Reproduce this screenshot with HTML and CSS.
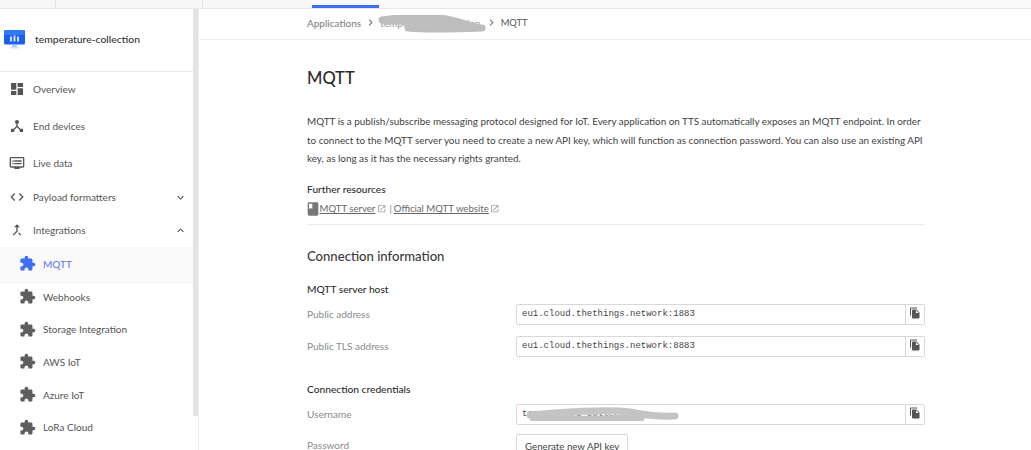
FILE: index.html
```html
<!DOCTYPE html>
<html lang="en">
<head>
<meta charset="utf-8">
<title>MQTT</title>
<link rel="stylesheet" href="styles.css">
</head>
<body>
<svg class="defs" width="0" height="0" aria-hidden="true">
  <symbol id="i-dashboard" viewBox="0 0 24 24"><path d="M3 13h8V3H3v10zm0 8h8v-6H3v6zm10 0h8V11h-8v10zm0-18v6h8V3h-8z"/></symbol>
  <symbol id="i-hub" viewBox="0 0 24 24"><path d="M17 16l-4-4V8.82C14.16 8.4 15 7.3 15 6c0-1.66-1.34-3-3-3S9 4.34 9 6c0 1.3.84 2.4 2 2.82V12l-4 4H3v5h5v-3.05l4-4.2 4 4.2V21h5v-5h-4z"/></symbol>
  <symbol id="i-dvr" viewBox="0 0 24 24"><path d="M21 3H3c-1.1 0-2 .9-2 2v12c0 1.1.9 2 2 2h5v2h8v-2h5c1.1 0 1.99-.9 1.99-2L23 5c0-1.1-.9-2-2-2zm0 14H3V5h18v12zm-2-9H8v2h11V8zm0 4H8v2h11v-2zM7 8H5v2h2V8zm0 4H5v2h2v-2z"/></symbol>
  <symbol id="i-code" viewBox="0 0 24 24"><path d="M9.4 16.6L4.8 12l4.6-4.6L8 6l-6 6 6 6 1.4-1.4zm5.2 0l4.6-4.6-4.6-4.6L16 6l6 6-6 6-1.4-1.4z"/></symbol>
  <symbol id="i-merge" viewBox="0 0 24 24"><path d="M17 20.41L18.41 19 15 15.59 13.59 17 17 20.41zM7.5 8H11v5.59L5.59 19 7 20.41l6-6V8h3.5L12 3.5 7.5 8z"/></symbol>
  <symbol id="i-ext" viewBox="0 0 24 24"><path d="M20.5 11H19V7c0-1.1-.9-2-2-2h-4V3.5C13 2.12 11.88 1 10.5 1S8 2.12 8 3.5V5H4c-1.1 0-1.99.9-1.99 2v3.8H3.5c1.49 0 2.7 1.21 2.7 2.7s-1.21 2.7-2.7 2.7H2V20c0 1.1.9 2 2 2h3.8v-1.5c0-1.49 1.21-2.7 2.7-2.7 1.49 0 2.7 1.21 2.7 2.7V22H17c1.1 0 2-.9 2-2v-4h1.5c1.38 0 2.5-1.12 2.5-2.5S21.88 11 20.5 11z"/></symbol>
  <symbol id="i-copy" viewBox="0 0 24 24"><path d="M16 1H4c-1.1 0-2 .9-2 2v14h2V3h12V1zm-1 4l6 6v10c0 1.1-.9 2-2 2H7.99C6.89 23 6 22.1 6 21l.01-14c0-1.1.89-2 1.99-2h7zm-1 7h5.5L14 6.5V12z"/></symbol>
  <symbol id="i-book" viewBox="0 0 24 24"><path d="M18 2H6c-1.1 0-2 .9-2 2v16c0 1.1.9 2 2 2h12c1.1 0 2-.9 2-2V4c0-1.1-.9-2-2-2zM6 4h5v8l-2.5-1.5L6 12V4z"/></symbol>
  <symbol id="i-launch" viewBox="0 0 24 24"><path d="M19 19H5V5h7V3H5c-1.11 0-2 .9-2 2v14c0 1.1.89 2 2 2h14c1.1 0 2-.9 2-2v-7h-2v7zM14 3v2h3.59l-9.83 9.83 1.41 1.41L19 6.41V10h2V3h-7z"/></symbol>
  <symbol id="i-down" viewBox="0 0 24 24"><path d="M7.41 8.59L12 13.17l4.59-4.58L18 10l-6 6-6-6 1.41-1.41z"/></symbol>
  <symbol id="i-up" viewBox="0 0 24 24"><path d="M7.41 15.41L12 10.83l4.59 4.58L18 14l-6-6-6 6z"/></symbol>
  <symbol id="i-right" viewBox="0 0 24 24"><path d="M10 6L8.59 7.41 13.17 12l-4.58 4.59L10 18l6-6z"/></symbol>
</svg>
<div class="app">
  <header class="topbar">
    <div class="seg seg-a"></div>
    <div class="seg seg-b"></div>
    <div class="seg seg-c"><span class="tab-active"></span></div>
    <div class="seg seg-d"></div>
  </header>
  <div class="main">
    <aside class="sidebar">
      <div class="side-inner">
        <div class="app-head">
          <svg class="logo" viewBox="0 0 21 19"><rect x="0" y="0" width="21" height="14.5" rx="1.5" fill="#1a5ff0"/><rect x="0" y="0" width="21" height="5" rx="1.5" fill="#2f7bf5"/><rect x="6" y="6.5" width="2" height="5" fill="#cfe0fb"/><rect x="9.5" y="5.5" width="2" height="6" fill="#cfe0fb"/><rect x="13" y="6.5" width="2" height="5" fill="#cfe0fb"/><rect x="8" y="15" width="5" height="2" fill="#a9d0f7"/><rect x="6" y="17" width="9" height="1.5" fill="#cfe4fa"/></svg>
          <span class="app-name">temperature-collection</span>
        </div>
        <nav class="nav">
          <a class="item tall"><svg class="ico"><use href="#i-dashboard"/></svg><span>Overview</span></a>
          <a class="item tall"><svg class="ico"><use href="#i-hub"/></svg><span>End devices</span></a>
          <a class="item tall"><svg class="ico"><use href="#i-dvr"/></svg><span>Live data</span></a>
          <a class="item"><svg class="ico"><use href="#i-code"/></svg><span>Payload formatters</span><svg class="caret"><use href="#i-down"/></svg></a>
          <a class="item open"><svg class="ico"><use href="#i-merge"/></svg><span>Integrations</span><svg class="caret"><use href="#i-up"/></svg></a>
          <a class="sub active"><svg class="ico-ext"><use href="#i-ext"/></svg><span>MQTT</span></a>
          <a class="sub first-after"><svg class="ico-ext"><use href="#i-ext"/></svg><span>Webhooks</span></a>
          <a class="sub short"><svg class="ico-ext"><use href="#i-ext"/></svg><span>Storage Integration</span></a>
          <a class="sub"><svg class="ico-ext"><use href="#i-ext"/></svg><span>AWS IoT</span></a>
          <a class="sub"><svg class="ico-ext"><use href="#i-ext"/></svg><span>Azure IoT</span></a>
          <a class="sub short"><svg class="ico-ext"><use href="#i-ext"/></svg><span>LoRa Cloud</span></a>
        </nav>
      </div>
      <div class="side-scroll"></div>
    </aside>
    <main class="content">
      <div class="crumbs">
        <span class="crumb">Applications</span>
        <svg class="crumb-sep"><use href="#i-right"/></svg>
        <span class="crumb crumb-hidden">temperature-collection
          <svg class="scribble" viewBox="0 0 110 20"><path d="M4 5 C30 1 60 1 78 6 L98 12 M30 13 C50 15 80 14 104 13" fill="none" stroke="#bdbdbd" stroke-width="7" stroke-linecap="round"/><path d="M6 6 C40 6 70 7 95 12" fill="none" stroke="#bdbdbd" stroke-width="7" stroke-linecap="round"/></svg>
        </span>
        <svg class="crumb-sep"><use href="#i-right"/></svg>
        <span class="crumb crumb-cur">MQTT</span>
      </div>
      <div class="page">
        <h1>MQTT</h1>
        <p class="intro">MQTT is a publish/subscribe messaging protocol designed for IoT. Every application on TTS automatically exposes an MQTT endpoint. In order<br>to connect to the MQTT server you need to create a new API key, which will function as connection password. You can also use an existing API<br>key, as long as it has the necessary rights granted.</p>
        <h4 class="further">Further resources</h4>
        <div class="links">
          <svg class="book"><use href="#i-book"/></svg>
          <a class="link">MQTT server</a><svg class="launch"><use href="#i-launch"/></svg>
          <span class="pipe">|</span>
          <a class="link">Official MQTT website</a><svg class="launch"><use href="#i-launch"/></svg>
        </div>
        <hr class="rule">
        <h2>Connection information</h2>
        <h4 class="group">MQTT server host</h4>
        <div class="field">
          <label>Public address</label>
          <div class="input"><span class="value">eu1.cloud.thethings.network:1883</span><button class="copy"><svg><use href="#i-copy"/></svg></button></div>
        </div>
        <div class="field">
          <label>Public TLS address</label>
          <div class="input"><span class="value">eu1.cloud.thethings.network:8883</span><button class="copy"><svg><use href="#i-copy"/></svg></button></div>
        </div>
        <h4 class="group creds">Connection credentials</h4>
        <div class="field">
          <label>Username</label>
          <div class="input"><span class="value">temperature-collection
            <svg class="scribble-user" viewBox="0 0 160 14"><path d="M5 8 C35 5 85 2 105 5 C118 7 124 10 150 9 M8 11 C50 13 90 12 116 11" fill="none" stroke="#c4c4c4" stroke-width="7" stroke-linecap="round"/></svg>
          </span><button class="copy"><svg><use href="#i-copy"/></svg></button></div>
        </div>
        <div class="field pw">
          <label>Password</label>
          <button class="gen">Generate new API key</button>
        </div>
      </div>
    </main>
  </div>
</div>
</body>
</html>
```
FILE: styles.css
```css
* { box-sizing: border-box; }
html, body { margin: 0; height: 450px; overflow: hidden; background: #fff; }
body { font-family: "Lato", "Noto Sans", sans-serif; font-size: 10px; color: #3a3a3a; }
.defs { position: absolute; }
svg { fill: currentColor; flex: none; }

.app { display: flex; flex-direction: column; height: 450px; }
.topbar { height: 9px; flex: none; display: flex; background: #f7f7f7; border-bottom: 1px solid #e8e8e8; }
.seg { height: 8px; border-right: 1px solid #e6e6e6; }
.seg-a { width: 56px; }
.seg-b { width: 147px; }
.seg-c { width: 176px; border-right: 0; display: flex; align-items: flex-end; padding-left: 109px; }
.seg-d { flex: 1; background: #fafafa; border-right: 0; }
.tab-active { display: block; width: 67px; height: 3px; background: #3e6ef2; }

.main { display: flex; flex: 1; min-height: 0; }
.sidebar { width: 199px; flex: none; display: flex; border-right: 1px solid #eeeeee; }
.side-inner { width: 193px; flex: none; }
.side-scroll { width: 5px; height: 407px; background: #e3e3e3; }

.app-head { height: 63px; display: flex; align-items: center; padding: 0 0 1px 4px; border-bottom: 1px solid #e9e9e9; }
.logo { width: 21px; height: 19px; margin-right: 10px; }
.app-name { font-size: 10.4px; font-weight: 500; color: #333; margin-bottom: 2px; }

.nav { display: flex; flex-direction: column; margin-top: -2px; }
.item, .sub { display: flex; align-items: center; color: #555; }
.item { height: 32px; padding: 0 6px 0 9px; }
.item.tall { height: 37px; }
.item.open { height: 34px; }
.ico { width: 16px; height: 16px; margin-right: 8px; color: #555; }
.caret { width: 13px; height: 13px; margin-left: auto; color: #555; }
.sub { height: 33px; padding-left: 19px; position: relative; }
.sub.short { height: 32px; }
.sub.active { height: 37px; padding-bottom: 4px; background: #fafafa; color: #5b6ff5; }
.sub.first-after { margin-top: -4px; }
.ico-ext { width: 17px; height: 17px; margin-right: 7px; color: #5e5e5e; }
.active .ico-ext { color: #3e6ef2; }

.content { flex: 1; min-width: 0; }
.crumbs { height: 31px; display: flex; align-items: center; padding: 0 0 3px 108px; border-bottom: 1px solid #eeeeee; color: #7b7b7b; }
.crumb-sep { width: 13px; height: 13px; margin: 0 3px; color: #777; }
.crumb-hidden { position: relative; width: 101.5px; white-space: nowrap; color: #9a9a9a; }
.crumb-cur { color: #555; font-size: 9.4px; }
.scribble { position: absolute; left: -2px; top: -2px; width: 110px; height: 20px; }

.page { padding: 28px 106px 0 108px; }
h1 { margin: 0; font-size: 16.5px; line-height: 20px; font-weight: 500; color: #2b2b2b; }
.intro { margin: 24px 0 0; line-height: 18.5px; color: #3f3f3f; white-space: nowrap; font-size: 9.9px; }
h4 { margin: 0; font-size: 10.2px; font-weight: 500; color: #2d2d2d; line-height: 14px; }
.further { margin-top: 14px; }
.links { display: flex; align-items: center; height: 14px; margin-top: 6px; color: #666; font-size: 9.6px; }
.book { width: 16px; height: 16px; margin: 0 -1.5px 0 -2px; color: #777; }
.link { text-decoration: underline; color: #666; }
.launch { width: 9.5px; height: 9.5px; margin-left: 1.5px; color: #999; }
.pipe { margin: 0 2px 0 3px; color: #777; }
.rule { border: 0; border-top: 1px solid #ececec; margin: 8px 0 0; }
h2 { margin: 23px 0 0; font-size: 13.1px; font-weight: 500; line-height: 17px; color: #3a3a3a; }
.group { margin-top: 17px; }
.creds { margin-top: 25px; }
.field { display: flex; align-items: center; }
.field + .field { margin-top: 11px; }
.group + .field { margin-top: 8px; }
.field label { width: 209px; flex: none; padding-bottom: 1px; color: #8a8a8a; }
.input { width: 409px; height: 21px; display: flex; align-items: center; border: 1px solid #d8d8d8; border-radius: 2px; background: #fff; }
.value { flex: 1; position: relative; padding-left: 5px; font-family: "Liberation Mono", monospace; font-size: 9px; color: #444; white-space: nowrap; }
.copy { width: 19px; height: 19px; padding: 0; border: 0; border-left: 1px solid #d8d8d8; background: #fff; display: flex; align-items: center; justify-content: center; color: #555; }
.copy svg { width: 12px; height: 12px; margin-top: -3px; }
.scribble-user { position: absolute; left: 8px; top: -2px; width: 160px; height: 14px; }
.field.pw { margin-top: 9px; }
.gen { height: 24px; padding: 0 8px; border: 1px solid #d8d8d8; border-radius: 2px; background: #fff; font-family: inherit; font-size: 9.7px; color: #444; }
```
